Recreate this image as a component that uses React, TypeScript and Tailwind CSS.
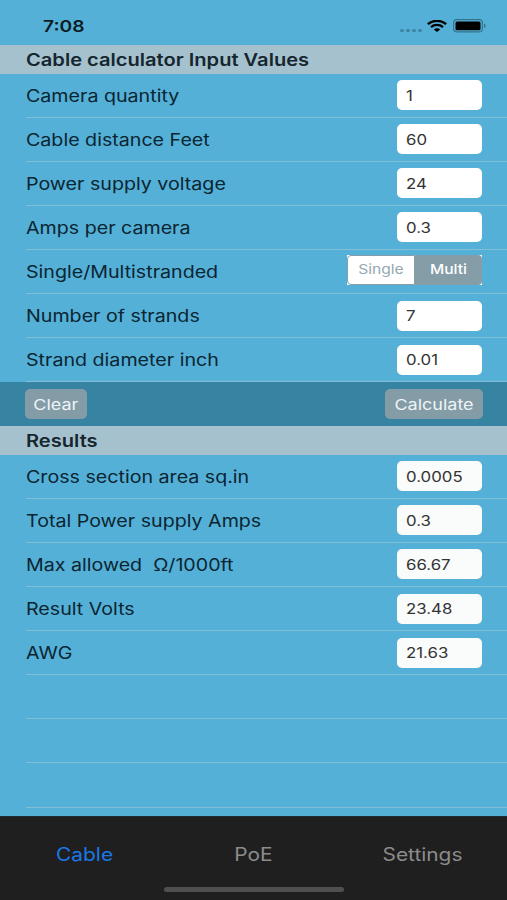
import clsx from "clsx";
import { useState } from "react";

type Row = {
  label: string;
  value: string;
};

const inputRows: Row[] = [
  { label: "Camera quantity", value: "1" },
  { label: "Cable distance Feet", value: "60" },
  { label: "Power supply voltage", value: "24" },
  { label: "Amps per camera", value: "0.3" },
];

const strandRows: Row[] = [
  { label: "Number of strands", value: "7" },
  { label: "Strand diameter inch", value: "0.01" },
];

const resultRows: Row[] = [
  { label: "Cross section area sq.in", value: "0.0005" },
  { label: "Total Power supply Amps", value: "0.3" },
  { label: "Max allowed  Ω/1000ft", value: "66.67" },
  { label: "Result Volts", value: "23.48" },
  { label: "AWG", value: "21.63" },
];

const tabs = ["Cable", "PoE", "Settings"];

const StatusBar = () => (
  <div className="flex h-[45px] items-center justify-between pt-[7px] pr-[21px] pl-[43px]">
    <span className="origin-left scale-x-[1.2] text-[16px] font-semibold text-[#0b1c24]">
      7:08
    </span>
    <div className="flex items-center">
      <div className="mt-[8px] mr-[5px] flex gap-[2px]">
        {[0, 1, 2, 3].map((dot) => (
          <span key={dot} className="h-[3px] w-[4px] rounded-full bg-[#3f86a5]" />
        ))}
      </div>
      <svg width="20" height="12" viewBox="0 0 20 12" className="mr-[6px]" fill="none">
        <path d="M0.800 4.200C6 -0.200 14 -0.200 19.200 4.200" stroke="#000" strokeWidth="2.400" />
        <path d="M4 7.100C7.300 4.200 12.700 4.200 16 7.100" stroke="#000" strokeWidth="2.300" />
        <path d="M6.800 9.400C8.700 7.700 11.300 7.700 13.200 9.400L10 12Z" fill="#000" />
      </svg>
      <svg width="33" height="14" viewBox="0 0 33 14">
        <rect x="0.600" y="0.600" width="28.800" height="12.300" rx="3.500" fill="none" stroke="#36738d" strokeWidth="1.200" />
        <rect x="2.500" y="2.400" width="25" height="8.800" rx="1.500" fill="#000" />
        <path d="M31 4.500C33 5 33 8.500 31 9Z" fill="#36738d" />
      </svg>
    </div>
  </div>
);

const SectionHeader = ({ title }: { title: string }) => (
  <h2 className="flex h-[28.5px] items-center bg-[#a5c1ce] pt-[2px] pl-[26px] text-[17px] font-semibold text-[#16262e]">
    <span className="origin-left scale-x-[1.182] whitespace-pre">{title}</span>
  </h2>
);

const RowShell = ({
  label,
  children,
}: {
  label?: string;
  children?: React.ReactNode;
}) => (
  <li className="ml-[26px] flex h-[44.1px] items-center justify-between border-b border-[#82bfd7] pr-[25px]">
    <span className="origin-left scale-x-[1.155] pt-[3px] text-[17px] whitespace-pre text-[#0b2531]">
      {label}
    </span>
    {children}
  </li>
);

const Field = ({ value, readOnly }: { value: string; readOnly?: boolean }) => (
  <div
    className={clsx(
      "flex h-[30px] w-[85px] items-center rounded-[5px] pl-[9px] text-[14px] text-[#333]",
      readOnly ? "bg-[#fafbfb]" : "bg-white",
    )}
  >
    <span className="origin-left scale-x-[1.2]">{value}</span>
  </div>
);

const StrandToggle = () => {
  const [selected, setSelected] = useState("Multi");

  return (
    <div className="mb-[3px] flex h-[30px] w-[135px] bg-white">
      {["Single", "Multi"].map((option) => (
        <button
          key={option}
          onClick={() => setSelected(option)}
          className={clsx(
            "flex w-1/2 items-center justify-center text-[13px]",
            selected === option
              ? "rounded-r-[4px] bg-[#849da7] font-medium text-white"
              : "rounded-l-[4px] border border-[#849da7] text-[#93a8b1]",
          )}
        >
          <span className="scale-x-[1.2]">{option}</span>
        </button>
      ))}
    </div>
  );
};

const ActionButton = ({ label, className }: { label: string; className: string }) => (
  <button
    className={clsx(
      "flex h-[30px] items-center justify-center rounded-[5px] bg-[#839ca6] pt-[2px] text-[15px] text-[#eef4f7]",
      className,
    )}
  >
    <span className="scale-x-[1.2]">{label}</span>
  </button>
);

const TabBar = () => {
  const [active, setActive] = useState("Cable");

  return (
    <nav className="flex h-[84px] flex-col items-center border-t border-[#1a2b33] bg-[#1f1f1f]">
      <ul className="flex w-full">
        {tabs.map((tab) => (
          <li key={tab} className="flex h-[73px] w-1/3 items-center justify-center pt-[2px]">
            <button
              onClick={() => setActive(tab)}
              className={clsx(
                "scale-x-[1.16] text-[18px]",
                active === tab ? "text-[#1a78e6]" : "text-[#8c8c8c]",
              )}
            >
              {tab}
            </button>
          </li>
        ))}
      </ul>
      <div className="-mt-[3px] h-[5px] w-[180px] shrink-0 rounded-full bg-[#4f4f4f]" />
    </nav>
  );
};

const App = () => {
  return (
    <div className="flex h-[900px] w-[507px] flex-col overflow-hidden bg-[#54b0d7] font-['Inter',sans-serif]">
      <StatusBar />
      <main className="h-[771px] overflow-hidden">
        <SectionHeader title="Cable calculator Input Values" />
        <ul>
          {inputRows.map(({ label, value }) => (
            <RowShell key={label} label={label}>
              <Field value={value} />
            </RowShell>
          ))}
          <RowShell label="Single/Multistranded">
            <StrandToggle />
          </RowShell>
          {strandRows.map(({ label, value }) => (
            <RowShell key={label} label={label}>
              <Field value={value} />
            </RowShell>
          ))}
        </ul>
        <div className="flex h-[44.1px] items-center justify-between bg-[#3783a2] pr-[24px] pl-[25px]">
          <ActionButton label="Clear" className="w-[62px]" />
          <ActionButton label="Calculate" className="w-[98px]" />
        </div>
        <SectionHeader title="Results" />
        <ul>
          {resultRows.map(({ label, value }) => (
            <RowShell key={label} label={label}>
              <Field value={value} readOnly />
            </RowShell>
          ))}
          {/* empty cells below the results */}
          {[0, 1, 2].map((cell) => (
            <RowShell key={cell} />
          ))}
        </ul>
      </main>
      <TabBar />
    </div>
  );
};

export default App;
